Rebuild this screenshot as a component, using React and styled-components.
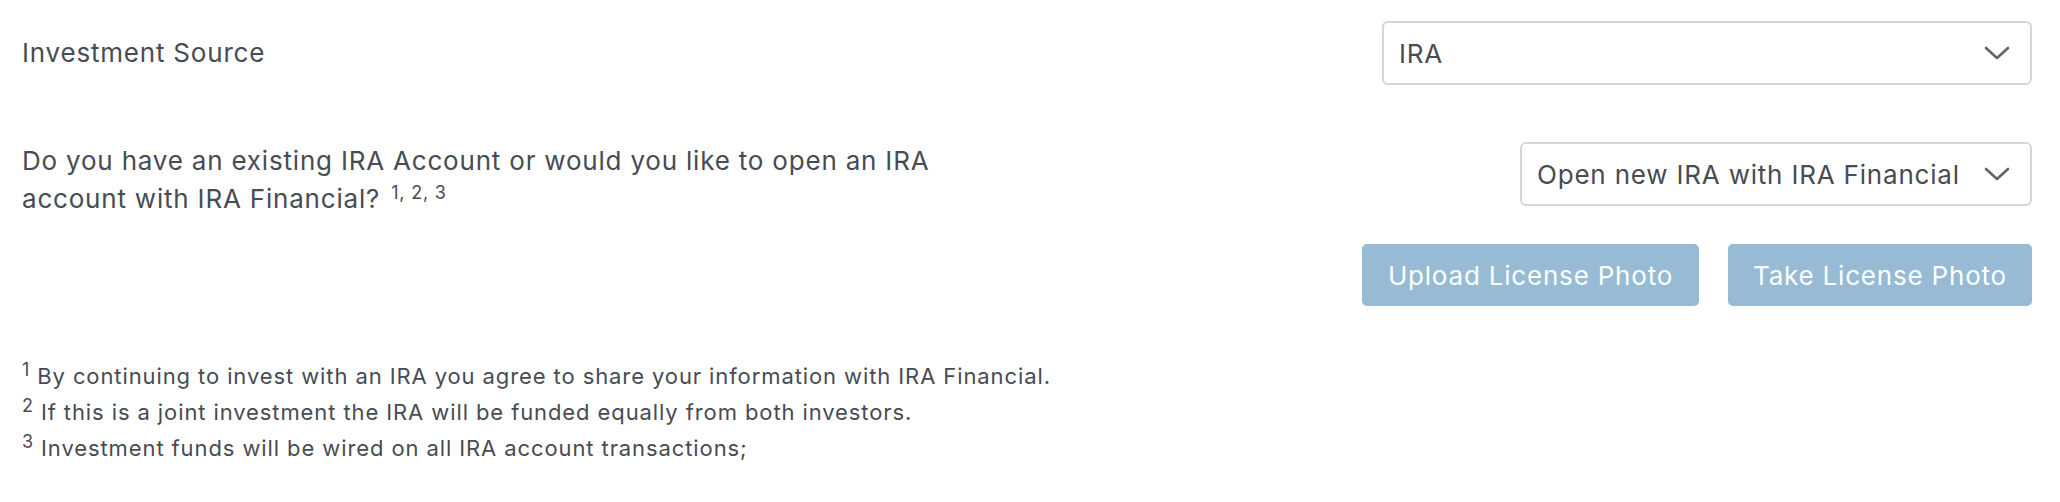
import React from "react";
import styled, { createGlobalStyle } from "styled-components";

const GlobalStyle = createGlobalStyle`
  html, body {
    margin: 0;
    padding: 0;
    background: #ffffff;
  }
  body {
    font-family: Inter, "Noto Sans", "Liberation Sans", sans-serif;
    color: #474c52;
    letter-spacing: 0.8px;
  }
`;

const PageStyle = styled.div`
  width: 2060px;
  height: 502px;
  box-sizing: border-box;
  padding: 21px 28px 0 22px;
`;

const RowStyle = styled.div`
  display: flex;
  justify-content: space-between;
  align-items: ${(p) => p.$align || "center"};
  margin-top: ${(p) => p.$top || 0}px;
`;

const LabelStyle = styled.div`
  font-size: 26px;
  line-height: 38px;
  max-width: ${(p) => p.$max || "none"};
  sup {
    font-size: 18px;
    line-height: 0;
    vertical-align: 9px;
    margin-left: 3px;
  }
`;

const SelectStyle = styled.div`
  display: flex;
  align-items: center;
  justify-content: space-between;
  box-sizing: border-box;
  width: ${(p) => p.$width}px;
  height: 64px;
  padding: 0 20px 0 15px;
  border: 2px solid #d3d7db;
  border-radius: 6px;
  font-size: 26px;
  color: #474c52;
  svg {
    flex-shrink: 0;
  }
`;

const ButtonRowStyle = styled.div`
  display: flex;
  justify-content: flex-end;
  gap: 29px;
  margin-top: 26px;
`;

const ButtonStyle = styled.button`
  height: 62px;
  width: ${(p) => p.$width}px;
  padding: 0;
  border: none;
  border-radius: 5px;
  background: #97bbd5;
  color: #ffffff;
  font-family: inherit;
  font-size: 26px;
  letter-spacing: 0.8px;
`;

const NotesStyle = styled.div`
  margin-top: 52px;
  font-size: 22px;
  line-height: 36px;
  letter-spacing: 0.9px;
  sup {
    font-size: 18px;
    line-height: 0;
    margin-right: 7px;
  }
`;

const Chevron = () => (
  <svg width="26" height="14" viewBox="0 0 26 14">
    <polyline
      points="2,2 13,12 24,2"
      fill="none"
      stroke="#5f656c"
      strokeWidth="2.6"
      strokeLinecap="round"
      strokeLinejoin="round"
    />
  </svg>
);

const App = () => {
  return (
    <>
      <GlobalStyle />
      <PageStyle>
        <RowStyle>
          <LabelStyle>Investment Source</LabelStyle>
          <SelectStyle $width={650}>
            <span>IRA</span>
            <Chevron />
          </SelectStyle>
        </RowStyle>
        <RowStyle $top={57} $align="flex-start">
          <LabelStyle $max="960px">
            Do you have an existing IRA Account or would you like to open an
            IRA account with IRA Financial? <sup>1, 2, 3</sup>
          </LabelStyle>
          <SelectStyle $width={512}>
            <span>Open new IRA with IRA Financial</span>
            <Chevron />
          </SelectStyle>
        </RowStyle>
        <ButtonRowStyle>
          <ButtonStyle $width={337}>Upload License Photo</ButtonStyle>
          <ButtonStyle $width={304}>Take License Photo</ButtonStyle>
        </ButtonRowStyle>
        <NotesStyle>
          <div>
            <sup>1</sup>By continuing to invest with an IRA you agree to share
            your information with IRA Financial.
          </div>
          <div>
            <sup>2</sup>If this is a joint investment the IRA will be funded
            equally from both investors.
          </div>
          <div>
            <sup>3</sup>Investment funds will be wired on all IRA account
            transactions;
          </div>
        </NotesStyle>
      </PageStyle>
    </>
  );
};

export default App;
